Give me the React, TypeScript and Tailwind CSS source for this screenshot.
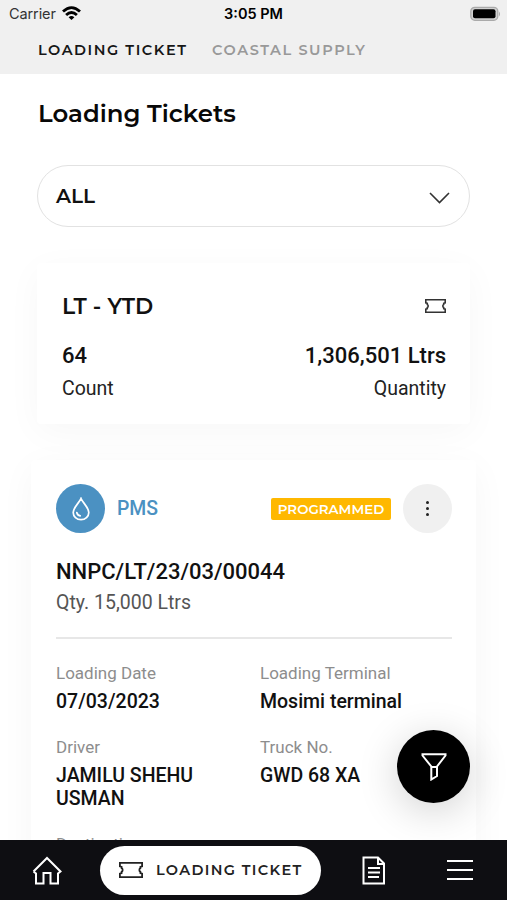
import type { ReactNode } from "react";

function TicketIcon({ className }: { className: string }) {
  return (
    <svg className={className} viewBox="0 0 24 16" fill="none" stroke="currentColor" strokeWidth="1.8" preserveAspectRatio="none">
      <path d="M.9.9H23.1V4.4L21.4 5V6.2C20 6.8 20 9.2 21.4 9.8V11L23.1 11.6V15.1H.9V11.6L2.6 11V9.8C4 9.2 4 6.8 2.6 6.2V5L.9 4.4Z" />
    </svg>
  );
}

function Field({ label, children }: { label: string; children: ReactNode }) {
  return (
    <div>
      <div className="h-5 text-[17px] leading-5 text-[#8d8d8d]">{label}</div>
      <div className="mt-[7px] text-[19.5px] font-medium leading-[23px] text-[#111]">{children}</div>
    </div>
  );
}

function StatusBar() {
  return (
    <div className="grid h-7 grid-cols-3 items-center pl-[9px] pr-[6px] font-['Inter',sans-serif] text-[14.5px]">
      <div className="flex items-center gap-[6px] text-[#333]">
        <span className="tracking-[-0.1px]">Carrier</span>
        <svg className="-mt-[2px] h-[15px] w-[19px]" viewBox="0 0 19 15" fill="none" stroke="#000" strokeWidth="2.8">
          <path d="M1 5.6Q9.5-2.4 18 5.6" />
          <path d="M4.1 9Q9.5 3.8 14.9 9" />
          <path d="M6.6 11.2Q9.5 8.7 12.4 11.2L9.5 14Z" fill="#000" stroke="none" />
        </svg>
      </div>
      <div className="-ml-[3px] text-center font-semibold text-black">3:05 PM</div>
      <svg className="-mt-px h-4 w-[31px] justify-self-end" viewBox="0 0 31 16">
        <rect x=".8" y="1.3" width="27" height="13" rx="4" fill="#d0d0d0" stroke="#aaa" strokeWidth="1.3" />
        <rect x="3" y="3.3" width="22.5" height="9" rx="2" fill="#000" />
        <path d="M29 5.5Q31 8 29 10.5Z" fill="#aaa" />
      </svg>
    </div>
  );
}

export default function App() {
  return (
    <div className="relative flex h-[900px] w-[507px] flex-col overflow-hidden bg-white font-['Roboto',sans-serif] text-[#111]">
      <header className="h-[74px] shrink-0 bg-[#f0f0f0]">
        <StatusBar />
        <nav className="flex h-[46px] items-center gap-[25px] pl-[38px] font-['Montserrat','Inter',sans-serif] text-[14.5px] font-semibold">
          <span className="w-[149px] whitespace-nowrap tracking-[1.55px] text-[#161616]">LOADING TICKET</span>
          <span className="whitespace-nowrap tracking-[1.6px] text-[#999]">COASTAL SUPPLY</span>
        </nav>
      </header>

      <main className="min-h-0 flex-1 overflow-hidden pt-[23px]">
        <h1 className="pl-[38px] font-['Montserrat','Inter',sans-serif] text-[24.4px] font-semibold leading-8 text-[#080808]">Loading Tickets</h1>

        <div className="mx-[37px] mt-9 flex h-[62px] items-center justify-between rounded-full border-[1.5px] border-[#e2e2e2] pl-[18px] pr-[19px]">
          <span className="font-['Montserrat','Inter',sans-serif] text-[20px] font-semibold">ALL</span>
          <svg className="mt-[3px] h-3 w-[21px]" viewBox="0 0 21 12" fill="none" stroke="#333" strokeWidth="1.6">
            <path d="M1 1L10.5 10.5L20 1" />
          </svg>
        </div>

        <section className="mx-[37px] mt-9 h-[161px] rounded bg-white pl-[25px] pr-6 pt-[29px] shadow-[0_8px_36px_rgba(0,0,0,0.035)]">
          <div className="flex h-7 items-center justify-between">
            <h2 className="font-['Montserrat','Inter',sans-serif] text-[22px] font-semibold">LT - YTD</h2>
            <TicketIcon className="h-[14px] w-[21px] text-[#333]" />
          </div>
          <div className="mt-[22px] flex justify-between text-[22px] font-medium leading-7">
            <span>64</span>
            <span>1,306,501 Ltrs</span>
          </div>
          <div className="mt-[5px] flex justify-between text-[19.5px] leading-7 text-[#222]">
            <span>Count</span>
            <span>Quantity</span>
          </div>
        </section>

        <article className="relative ml-[31px] mr-[31px] mt-9 h-[440px] rounded bg-white pl-[25px] pr-6 pt-6 shadow-[0_8px_36px_rgba(0,0,0,0.04)]">
          <div className="flex h-[49px] items-center">
            <div className="flex size-[49px] items-center justify-center rounded-full bg-[#4b91c2]">
              <svg className="h-6 w-[18px]" viewBox="0 0 18 24" fill="none" stroke="white" strokeWidth="1.7" strokeLinecap="round">
                <path d="M9 1.5C7.7 5.1 1.2 10.6 1.2 15.4A7.8 7.3 0 0 0 16.8 15.4C16.8 10.6 10.3 5.1 9 1.5Z" />
                <path d="M4.8 15.5Q5.3 18.2 8.2 18.8" />
              </svg>
            </div>
            <span className="ml-3 pt-px text-[19.4px] font-medium text-[#4b91c2]">PMS</span>
            <span className="ml-auto mt-px flex h-[22px] w-[120px] items-center justify-center rounded-[2px] bg-[#ffb800] font-['Montserrat','Inter',sans-serif] text-[13.4px] font-semibold text-white">PROGRAMMED</span>
            <div className="ml-3 flex size-[49px] flex-col items-center justify-center gap-[3px] rounded-full bg-[#f0f0f0]">
              <i className="size-[3px] rounded-full bg-[#222]" />
              <i className="size-[3px] rounded-full bg-[#222]" />
              <i className="size-[3px] rounded-full bg-[#222]" />
            </div>
          </div>
          <h3 className="mt-[25px] text-[22px] font-medium leading-7">NNPC/LT/23/03/00044</h3>
          <p className="mt-[3px] text-[19.5px] leading-7 text-[#555]">Qty. 15,000 Ltrs</p>
          <hr className="mt-[20px] border-t-2 border-[#e7e7e7]" />
          <div className="mt-6 grid grid-cols-[204px_1fr] gap-y-6">
            <Field label="Loading Date">07/03/2023</Field>
            <Field label="Loading Terminal">Mosimi terminal</Field>
            <Field label="Driver">JAMILU SHEHU<br />USMAN</Field>
            <Field label="Truck No.">GWD 68 XA</Field>
            <Field label="Destination">{null}</Field>
          </div>
        </article>
      </main>

      <button className="absolute left-[397px] top-[730px] flex size-[73px] items-center justify-center rounded-full bg-black shadow-[0_8px_40px_rgba(0,0,0,0.18)]" aria-label="Filter">
        <svg className="h-7 w-[26px]" viewBox="0 0 26 28" fill="none" stroke="white" strokeWidth="2">
          <path d="M1.5 1.2H24.5V2.5L16 13.5V23L10.3 26.5V13.5L1.5 2.5ZM10.3 14H16" />
        </svg>
      </button>

      <footer className="relative flex h-[60px] shrink-0 items-center bg-[#0e0e12] text-white">
        <svg className="ml-8 h-[29px] w-[30px]" viewBox="0 0 30 29" fill="none" stroke="currentColor" strokeWidth="2">
          <path d="M1.5 15.5L15 2L28.5 15.5L26 17.5V27.5H18.5V17H11.5V27.5H4V17.5L1.5 15.5" />
        </svg>
        <div className="ml-[38px] flex h-[49px] w-[221px] items-center gap-[13px] rounded-full bg-white pl-[19px] text-[#222]">
          <TicketIcon className="h-4 w-6 shrink-0" />
          <span className="whitespace-nowrap pt-px font-['Montserrat','Inter',sans-serif] text-[14.5px] font-semibold tracking-[1.35px]">LOADING TICKET</span>
        </div>
        <svg className="ml-[41px] h-[29px] w-6" viewBox="0 0 24 29" fill="none" stroke="currentColor" strokeWidth="2">
          <path d="M1.5 1.5H16L22 7.5V27.5H1.5ZM16 1.5V8H22M6 12H18M6 16.5H18M6 21H17" />
        </svg>
        <svg className="ml-[61px] h-[22px] w-[26px]" viewBox="0 0 26 22" stroke="currentColor" strokeWidth="2">
          <path d="M0 2H26M0 11H26M0 20H26" />
        </svg>
      </footer>
    </div>
  );
}
